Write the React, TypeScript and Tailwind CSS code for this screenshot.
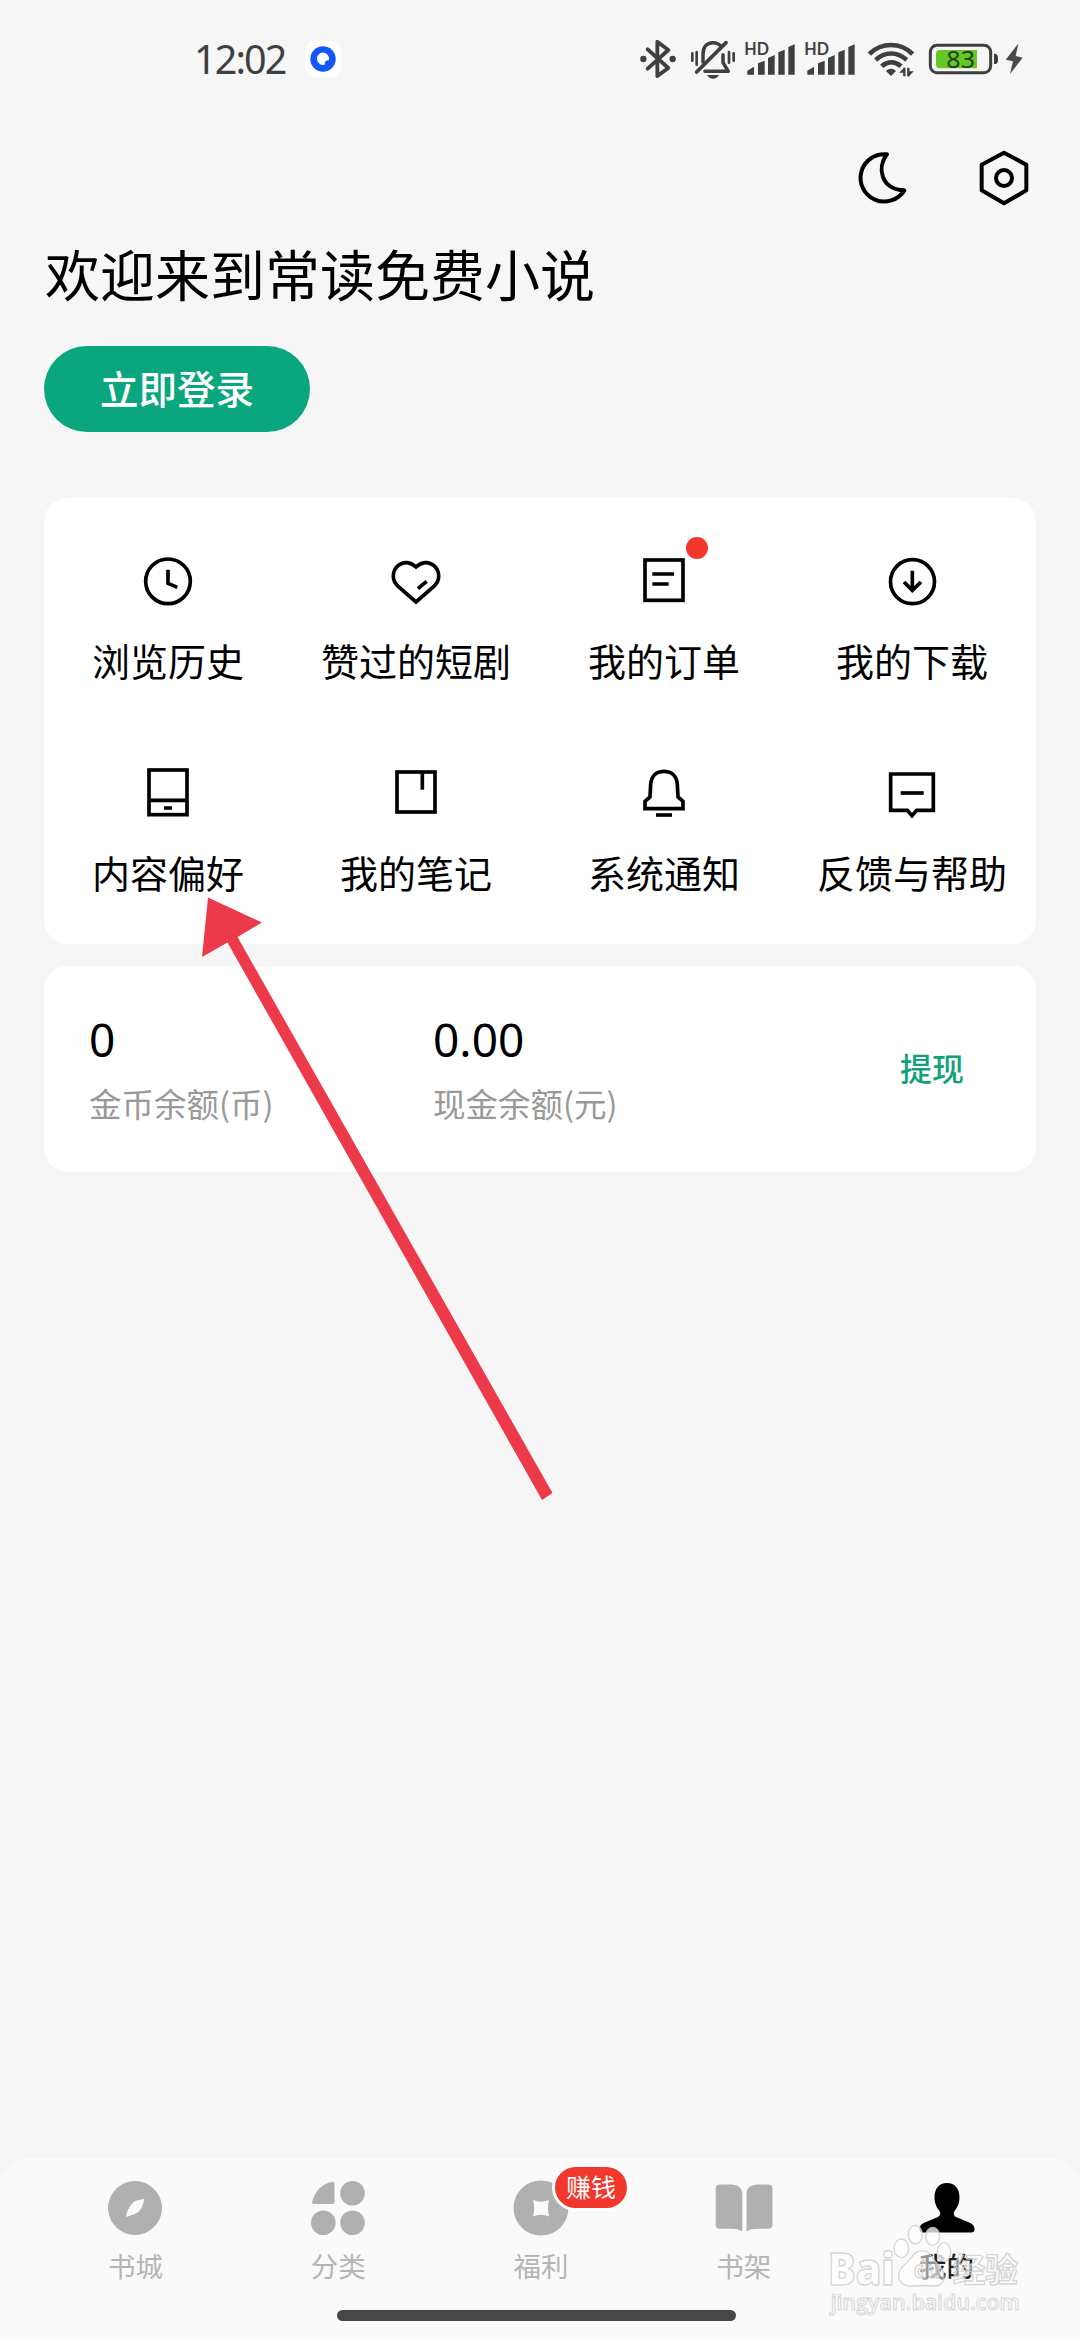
import React from 'react';

const FONT = "font-['Noto_Sans_CJK_SC',sans-serif]";

type MenuItem = {
  label: string;
  viewBox: string;
  icon: React.ReactNode;
  dot?: boolean;
};

const menuItems: MenuItem[] = [
  {
    label: '浏览历史',
    viewBox: '303 191 162 162',
    icon: (
      <>
        <circle cx="384" cy="273" r="67" />
        <path d="M384 238V279L412 291" />
      </>
    ),
  },
  {
    label: '赞过的短剧',
    viewBox: '1047 191 162 162',
    icon: (
      <>
        <path d="M1128 230C1112 214 1090 212 1074 226C1055 243 1056 269 1072 286L1128 335L1184 286C1200 269 1201 243 1182 226C1166 212 1144 214 1128 230Z" />
        <path d="M1134 295L1160 273" />
      </>
    ),
  },
  {
    label: '我的订单',
    viewBox: '291 191 162 162',
    dot: true,
    icon: (
      <>
        <rect x="315" y="209" width="114" height="121" />
        <path d="M337 251H402M337 281H386" />
      </>
    ),
  },
  {
    label: '我的下载',
    viewBox: '1035 191 162 162',
    icon: (
      <>
        <circle cx="1117.500" cy="274" r="66" />
        <path d="M1117 241V301M1092 275L1117 300L1143 275" />
      </>
    ),
  },
  {
    label: '内容偏好',
    viewBox: '303 827 162 162',
    icon: (
      <>
        <rect x="327" y="839" width="114" height="134" />
        <path d="M327 930H441M372 953H396" />
      </>
    ),
  },
  {
    label: '我的笔记',
    viewBox: '1047 827 162 162',
    icon: (
      <>
        <rect x="1071" y="845" width="114" height="120" />
        <path d="M1147 845V898" />
      </>
    ),
  },
  {
    label: '系统通知',
    viewBox: '291 827 162 162',
    icon: (
      <>
        <path d="M315 955V933L330 920L332 882C334 856 350 843 372 843C394 843 410 856 412 882L414 920L429 933V955Z" />
        <path d="M348 974H396" />
      </>
    ),
  },
  {
    label: '反馈与帮助',
    viewBox: '1035 827 162 162',
    icon: (
      <>
        <path d="M1052 851H1180V960H1130L1116 976L1102 960H1052Z" />
        <path d="M1082 908H1151" />
      </>
    ),
  },
];

function BluetoothIcon() {
  return (
    <svg className="h-[44px] w-[44px]" viewBox="48 51 132 132" fill="none" stroke="#3f3f3f" strokeWidth="11.500">
      <path d="M74 88L136 144L103 168V65L136 90L74 146" strokeLinejoin="round" strokeLinecap="round" />
      <circle cx="61" cy="117" r="9.500" fill="#3f3f3f" stroke="none" />
      <circle cx="149" cy="117" r="9.500" fill="#3f3f3f" stroke="none" />
    </svg>
  );
}

function MutedBellIcon() {
  return (
    <svg className="h-[44px] w-[60px]" viewBox="180 51 180 132" fill="none" stroke="#3f3f3f" strokeWidth="10.500">
      <path d="M240 126V104C240 80 252 68 269 68C280 68 289 72 295 80" strokeLinecap="round" />
      <path d="M300 104V128L316 154H246" strokeLinecap="round" strokeLinejoin="round" />
      <path d="M221 156L309 68" strokeWidth="11" strokeLinecap="round" />
      <path d="M252 165H288C284 172 278 176 270 176C262 176 256 172 252 165Z" fill="#3f3f3f" stroke="none" />
      <path d="M208 100V122M221 96V134M318 96V128M332 100V122" strokeWidth="8" strokeLinecap="round" />
    </svg>
  );
}

function SignalIcon() {
  return (
    <svg className="h-[44px] w-[60px]" viewBox="366 51 180 132" fill="#3f3f3f">
      <text
        x="370"
        y="105"
        fontSize="49"
        fontWeight="700"
        textLength="74"
        lengthAdjust="spacingAndGlyphs"
        className="font-['Lato',sans-serif]"
      >
        HD
      </text>
      <path d="M379 152L399 140V164H379Z" />
      <path d="M411 130L431 122V164H411Z" />
      <path d="M441 114L461 105V164H441Z" />
      <path d="M472 97L491 89V164H472Z" />
      <path d="M502 81L521 73V164H502Z" />
    </svg>
  );
}

function WifiStatusIcon() {
  return (
    <svg className="h-[44px] w-[60px]" viewBox="726 51 180 132" fill="none" stroke="#3f3f3f" strokeWidth="14">
      <path d="M745 102C782 66 838 66 875 102" />
      <path d="M764 120C791 94 829 94 857 120" />
      <path d="M782 139C800 123 822 123 840 139" />
      <path d="M795 153C804 144 816 144 825 153L810 168Z" fill="#3f3f3f" stroke="none" />
      <path d="M850 143V169M862 143V169" strokeWidth="7" />
      <path d="M834 158L850 143V158ZM862 154H878L862 171Z" fill="#3f3f3f" stroke="none" />
    </svg>
  );
}

function BatteryIcon() {
  return (
    <svg className="h-[44px] w-[80px]" viewBox="906 51 240 132" fill="none">
      <rect x="928" y="76" width="181" height="82" rx="20" stroke="#3f3f3f" strokeWidth="9" />
      <path d="M956 90H1068V145H956C949 145 945 141 945 134V101C945 94 949 90 956 90Z" fill="#65c824" />
      <path d="M1119 101C1127 101 1131 105 1131 112V122C1131 129 1127 132 1119 132Z" fill="#3f3f3f" />
      <text x="976" y="143" fontSize="70" fill="#263d17" textLength="86" lengthAdjust="spacingAndGlyphs" className="font-['Noto_Sans',sans-serif]">
        83
      </text>
    </svg>
  );
}

function StatusBar() {
  return (
    <div className="flex h-[118px] shrink-0 items-center pr-[55px] pl-[194px]">
      <span className="w-[111px] font-['Noto_Sans',sans-serif] text-[39.5px] leading-[44px] tracking-[-1.9px] whitespace-nowrap text-[#3f3f3f]">
        12:02
      </span>
      <span className="flex h-[36px] w-[36px] items-center justify-center rounded-[9px] bg-white">
        <svg className="h-[26px] w-[26px]" viewBox="0 0 26 26">
          <circle cx="13" cy="13" r="12.700" fill="#1457f8" />
          <path d="M13 6.500A6.200 6.200 0 1 0 15 18.600C14.500 15.500 15.500 14.400 18.900 14.200A6.200 6.200 0 0 0 13 6.500Z" fill="#fff" />
        </svg>
      </span>
      <div className="ml-auto flex items-center">
        <BluetoothIcon />
        <MutedBellIcon />
        <SignalIcon />
        <SignalIcon />
        <WifiStatusIcon />
        <BatteryIcon />
        <svg className="h-[44px] w-[22px]" viewBox="1146 51 66 132" fill="#4a4a4a">
          <path d="M1192 71L1154 119L1176 124L1167 162L1205 113L1184 108Z" />
        </svg>
      </div>
    </div>
  );
}

function Toolbar() {
  return (
    <div className="flex h-[120px] shrink-0 items-center justify-end gap-[68px] pr-[50px]">
      <svg className="h-[58px] w-[54px]" viewBox="108 57 162 174" fill="none" stroke="#000" strokeWidth="12" strokeLinejoin="round">
        <path d="M201 73A71 71 0 1 0 253 181C182 178 170 112 201 73Z" />
      </svg>
      <svg className="h-[58px] w-[52px]" viewBox="474 57 156 174" fill="none" stroke="#000" strokeWidth="12" strokeLinejoin="round">
        <path d="M552 68L619 104V181L552 220L485 181V104Z" />
        <circle cx="552" cy="144" r="24" />
      </svg>
    </div>
  );
}

function MenuCard() {
  return (
    <section className="mt-[66px] grid h-[446px] grid-cols-4 content-start gap-y-[80px] rounded-[24px] bg-white pt-[56px]">
      {menuItems.map((item) => (
        <div key={item.label} className="flex flex-col items-center">
          <div className="relative">
            <svg className="h-[54px] w-[54px]" viewBox={item.viewBox} fill="none" stroke="#000" strokeWidth="11">
              {item.icon}
            </svg>
            {item.dot && <span className="absolute top-[-17px] left-[49px] h-[22px] w-[22px] rounded-full bg-[#f2372c]" />}
          </div>
          <span className="mt-[28px] mb-[2px] text-[38px] leading-[48px] whitespace-nowrap text-black">{item.label}</span>
        </div>
      ))}
    </section>
  );
}

function BalanceCard() {
  return (
    <section className="mt-[22px] flex h-[206px] items-center rounded-[24px] bg-white pr-[72px] pb-[4px] pl-[45px]">
      <div className="flex w-[344px] flex-col gap-[8px]">
        <span className="font-['Noto_Sans',sans-serif] text-[46px] leading-[64px] text-black">0</span>
        <span className="text-[32.5px] leading-[48px] text-[#999999]">金币余额(币)</span>
      </div>
      <div className="flex flex-col gap-[8px]">
        <span className="font-['Noto_Sans',sans-serif] text-[46px] leading-[64px] text-black">0.00</span>
        <span className="text-[32.5px] leading-[48px] text-[#999999]">现金余额(元)</span>
      </div>
      <span className="ml-auto text-[32px] leading-[48px] font-medium text-[#12a17a]">提现</span>
    </section>
  );
}

const tabs = [
  {
    label: '书城',
    icon: (
      <>
        <circle cx="27" cy="27" r="27" />
        <path d="M36 18C35 26 32 31 27 33L18 36C19 29 22 24 27 20Z" fill="#fafafa" />
      </>
    ),
  },
  {
    label: '分类',
    icon: (
      <>
        <path d="M21.500 .8Q23.500 .5 23.500 2.500V21Q23.500 23 21.500 23H3Q.8 23 1.200 20.500C4 10 11 3 21.500 .8Z" />
        <circle cx="41.500" cy="12.200" r="12.300" />
        <circle cx="12.300" cy="41.700" r="12.300" />
        <circle cx="41.500" cy="41.700" r="12.300" />
      </>
    ),
  },
  {
    label: '福利',
    badge: '赚钱',
    icon: (
      <>
        <circle cx="27" cy="27" r="27.500" />
        <path d="M19 19Q27 22.500 35 19Q33 27 35 35.500Q27 32 19 35.500Q21.500 27 19 19Z" fill="#fafafa" />
      </>
    ),
  },
  {
    label: '书架',
    icon: (
      <>
        <path d="M3 3.500H14C21 3.500 25.300 7 25.300 13V50.500C22 48.500 19 47.800 15 47.800H3Q-1.300 47.800 -1.300 43.800V7.500Q-1.300 3.500 3 3.500Z" />
        <path d="M51 3.500H41C33.500 3.500 29.500 7 29.500 13V50.500C33 48.500 36 47.800 40 47.800H51Q55.500 47.800 55.500 43.800V7.500Q55.500 3.500 51 3.500Z" />
      </>
    ),
  },
  {
    label: '我的',
    active: true,
    icon: (
      <path d="M27 2C35 2 39.500 8 39.500 16C39.500 23 37 27 34.500 30C33 32.500 34 35 36 36L48 41C53 43 54.500 45 54.500 48Q54.500 51.500 51 51.500H3Q-.5 51.500 -.5 48C-.5 45 1 43 6 41L18 36C20 35 21 32.500 19.500 30C17 27 14.500 23 14.500 16C14.500 8 19 2 27 2Z" />
    ),
  },
];

function TabBar() {
  return (
    <nav className="mt-auto flex h-[182px] shrink-0 flex-col items-start rounded-t-[28px] bg-[#fafafa] pt-[23px]">
      <div className="grid w-full grid-cols-5 pr-[32px] pl-[34px]">
        {tabs.map((tab) => (
          <div key={tab.label} className="flex flex-col items-center">
            <div className="relative">
              <svg
                className={tab.active ? 'h-[54px] w-[54px] overflow-visible fill-black' : 'h-[54px] w-[54px] overflow-visible fill-[#b0b0b0]'}
                viewBox="0 0 54 54"
              >
                {tab.icon}
              </svg>
              {tab.badge && (
                <span className="absolute top-[-17px] left-[38px] flex h-[47px] w-[78px] items-center justify-center rounded-full border-[3px] border-white bg-[#f2372c] pb-[2px] text-[25px] leading-none whitespace-nowrap text-white">
                  {tab.badge}
                </span>
              )}
            </div>
            <span className={tab.active ? 'mt-[10px] text-[27.5px] leading-[40px] font-medium text-[#222222]' : 'mt-[10px] text-[27.5px] leading-[40px] text-[#b5b5b5]'}>
              {tab.label}
            </span>
          </div>
        ))}
      </div>
      <div className="mt-[25px] ml-[337px] h-[11px] w-[399px] rounded-full bg-[#474747]" />
    </nav>
  );
}

function Watermark() {
  return (
    <svg
      className="pointer-events-none absolute top-[2215px] left-[820px] h-[110px] w-[210px] overflow-visible"
      viewBox="30 165 630 330"
      fill="#fff"
      fillOpacity="0.75"
      stroke="#cccccc"
      strokeOpacity="0.8"
      strokeWidth="4"
    >
      <ellipse cx="274" cy="265" rx="22" ry="28" />
      <ellipse cx="316" cy="224" rx="21" ry="28" />
      <ellipse cx="368" cy="229" rx="21" ry="27" />
      <ellipse cx="402" cy="276" rx="20" ry="28" />
      <path
        d="M336 272C356 272 362 285 372 300C384 316 402 326 402 350C402 370 388 379 370 378C350 376 330 376 308 378C282 380 266 368 266 346C266 326 282 316 296 302C310 286 316 272 336 272Z"
        fillOpacity="0.5"
      />
      <text x="54" y="374" fontSize="130" fontWeight="800" textLength="200" lengthAdjust="spacingAndGlyphs" className="font-['Open_Sans',sans-serif]">
        Bai
      </text>
      <text x="312" y="354" fontSize="72" fontWeight="700" textLength="80" lengthAdjust="spacingAndGlyphs" fillOpacity="0.3" className="font-['Open_Sans',sans-serif]">
        du
      </text>
      <text x="428" y="366" fontSize="100" fontWeight="700" textLength="196" lengthAdjust="spacingAndGlyphs" fillOpacity="0.5" className="font-['Noto_Sans_CJK_SC',sans-serif]">
        经验
      </text>
      <text x="62" y="450" fontSize="63" fontWeight="600" textLength="568" strokeWidth="3" lengthAdjust="spacingAndGlyphs" className="font-['Open_Sans',sans-serif]">
        jingyan.baidu.com
      </text>
    </svg>
  );
}

export default function App() {
  return (
    <div className={`relative flex h-[2340px] w-[1080px] flex-col overflow-hidden bg-[#f6f6f6] ${FONT}`}>
      <StatusBar />
      <Toolbar />
      <main className="flex flex-col px-[44px]">
        <h1 className="mt-px pl-px text-[55px] leading-[66px] whitespace-nowrap text-black">欢迎来到常读免费小说</h1>
        <button className="mt-[41px] h-[86px] w-[266px] rounded-full bg-[#0aa67d] pb-[4px] text-[38.5px] leading-[48px] font-medium text-white">
          立即登录
        </button>
        <MenuCard />
        <BalanceCard />
      </main>
      <TabBar />

      {/* Pointer to the content preference entry */}
      <svg className="pointer-events-none absolute top-[890px] left-[190px] h-[620px] w-[370px]" viewBox="190 890 370 620" fill="#ec3a4a">
        <path d="M208 897.500L262 922.500L237.500 937L552.500 1493L542 1500L227.500 942.500L202 957Z" />
      </svg>
      <Watermark />
    </div>
  );
}
